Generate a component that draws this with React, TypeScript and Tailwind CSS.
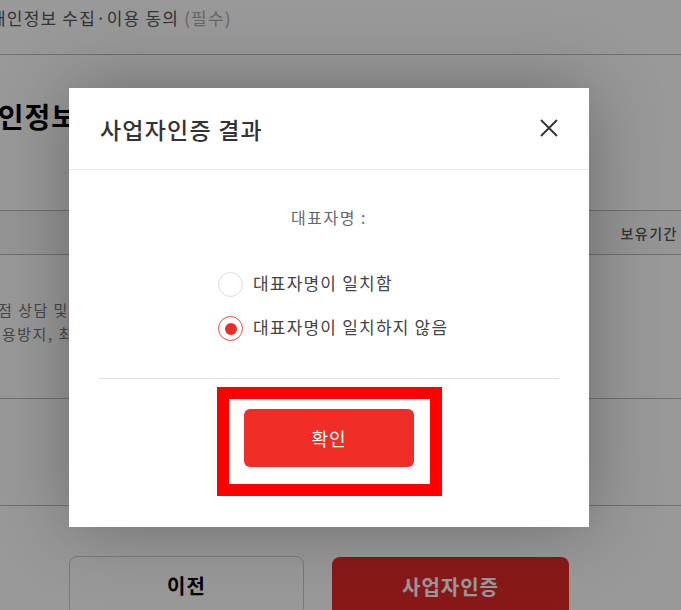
import React from "react";

const font = { fontFamily: '"Noto Sans CJK KR", "Noto Sans", sans-serif' };

export default function App() {
  return (
    <div className="relative w-[681px] h-[610px] overflow-hidden bg-white" style={font}>
      {/* underlying page */}
      <div className="flex flex-col">
        <div className="h-[55px] border-b border-[#bbbbbb] flex items-center">
          <p className="ml-[-10px] text-[17px] leading-[24px] tracking-[1.2px] text-[#555] whitespace-nowrap -mt-[19px]">
            개인정보 수집·이용 동의 <span className="text-[#aaaaaa]">(필수)</span>
          </p>
        </div>
        <div className="h-[155px] flex items-start pt-[45px]">
          <h2 className="ml-[-29px] text-[28px] leading-[32px] tracking-[1px] font-bold text-black whitespace-nowrap">
            개인정보 수집·이용 동의
          </h2>
        </div>
        <div className="h-[45px] border-y border-[#bbbbbb] bg-[#f8f8f8] flex items-center justify-end pr-[3px]">
          <span className="text-[14px] leading-[20px] tracking-[1.5px] font-medium text-[#555]">보유기간</span>
        </div>
        <div className="h-[144px] border-b border-[#bbbbbb] flex flex-col justify-start pt-[43px]">
          <p className="text-[15px] leading-[24px] tracking-[1.5px] text-[#777] whitespace-nowrap ml-[-2px]">점 상담 및</p>
          <p className="text-[15px] leading-[24px] tracking-[1.5px] text-[#777] whitespace-nowrap ml-[2px]">용방지, 최</p>
        </div>
        <div className="h-[107px] border-b border-[#bbbbbb]" />
        <div className="flex pl-[69px] gap-[28px] pt-[50px]">
          <button className="w-[235px] h-[60px] border border-[#cccccc] rounded-[8px] text-[20px] tracking-[1px] font-bold text-black bg-white">
            이전
          </button>
          <button className="w-[237px] h-[60px] rounded-[8px] text-[20px] tracking-[1px] font-bold text-white bg-[#e52b2b] mt-[1px]">
            사업자인증
          </button>
        </div>
      </div>

      {/* overlay */}
      <div className="absolute inset-0 bg-black/40" />

      {/* modal */}
      <div className="absolute left-[69px] top-[88px] w-[520px] h-[439px] bg-white flex flex-col shadow-[0_0_70px_rgba(0,0,0,0.3)]">
        <div className="h-[82px] border-b border-[#ebebeb] flex items-center justify-between pl-[31px] pr-[31px] shrink-0">
          <h3 className="text-[23px] leading-[30px] tracking-[1.2px] font-medium text-[#333]">사업자인증 결과</h3>
          <svg width="18" height="18" viewBox="0 0 18 18" className="mt-[-1px]">
            <path d="M1 1 L17 17 M17 1 L1 17" stroke="#333" strokeWidth="1.8" fill="none" />
          </svg>
        </div>
        <div className="flex flex-col items-center">
          <p className="mt-[35px] h-[24px] text-[16px] leading-[24px] tracking-[1.5px] text-[#666]">대표자명 :</p>
          <div className="mt-[43px] flex flex-col gap-[19px] w-full pl-[149px]">
            <label className="flex items-center gap-[10px] h-[25px]">
              <span className="w-[25px] h-[25px] rounded-full border-[1.5px] border-[#dddddd] bg-white" />
              <span className="text-[17px] leading-[24px] tracking-[1.2px] text-[#444] -mt-[3px]">대표자명이 일치함</span>
            </label>
            <label className="flex items-center gap-[10px] h-[25px]">
              <span className="w-[25px] h-[25px] rounded-full border-[1.5px] border-[#f04a45] bg-white flex items-center justify-center">
                <span className="w-[12px] h-[12px] rounded-full bg-[#ee2c27]" />
              </span>
              <span className="text-[17px] leading-[24px] tracking-[1.2px] text-[#444] -mt-[3px]">대표자명이 일치하지 않음</span>
            </label>
          </div>
          <div className="mt-[37px] h-px w-[460px] bg-[#e0e0e0]" />
          <div className="mt-[8px] w-[225px] h-[109px] border-[12px] border-[#ff0000] flex justify-center pt-[10px]">
            <button className="w-[170px] h-[58px] rounded-[6px] bg-[#f02d27] text-white text-[18px] leading-[24px] tracking-[1px]">
              확인
            </button>
          </div>
        </div>
      </div>
    </div>
  );
}
